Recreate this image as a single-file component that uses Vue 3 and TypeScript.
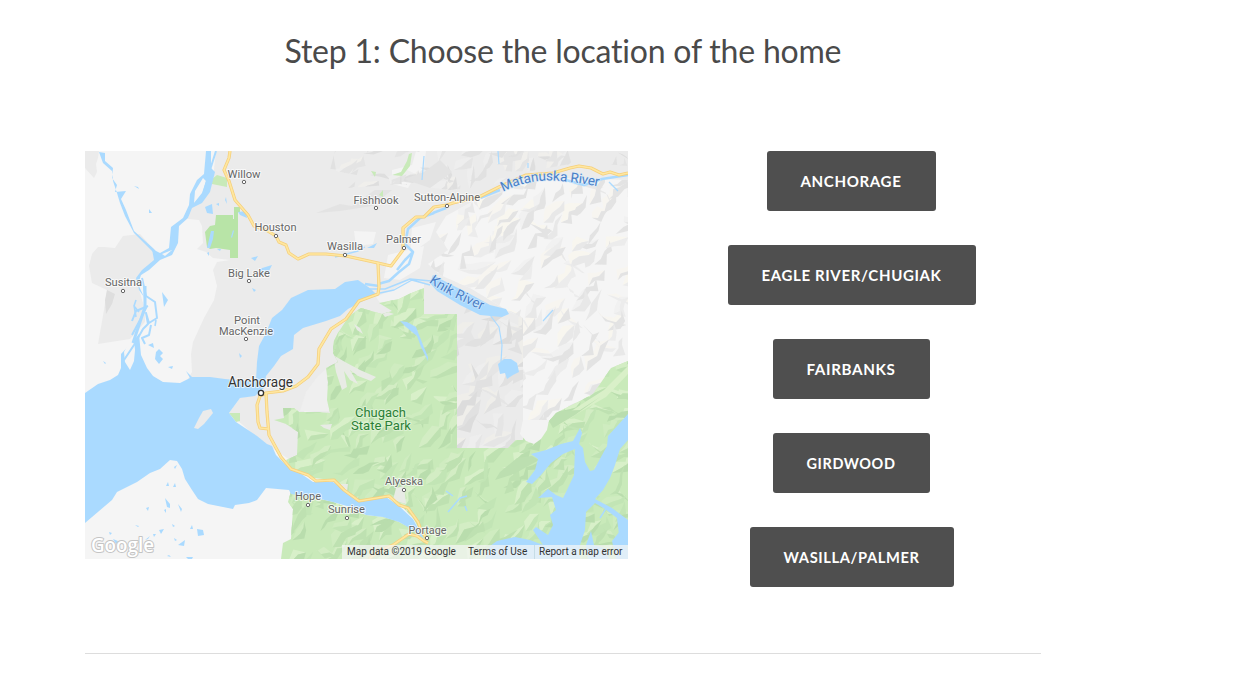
<script setup lang="ts">
interface Place {
  name: string;
  x: number;
  y: number;
  w: number;
  dot?: [number, number];
}

interface Facet {
  d: string;
  fill: string;
}

const locations = [
  { name: "Anchorage", width: 169, text: 101 },
  { name: "Eagle River/Chugiak", width: 248, text: 180 },
  { name: "Fairbanks", width: 157, text: 89 },
  { name: "Girdwood", width: 157, text: 89 },
  { name: "Wasilla/Palmer", width: 204, text: 136 },
];

const places: Place[] = [
  { name: "Willow", x: 244, y: 178, w: 33, dot: [244, 182] },
  { name: "Houston", x: 275.5, y: 231, w: 42, dot: [276, 236] },
  { name: "Fishhook", x: 376, y: 204, w: 45, dot: [376, 208] },
  { name: "Sutton-Alpine", x: 447, y: 201, w: 66, dot: [447, 206] },
  { name: "Wasilla", x: 345, y: 250, w: 36, dot: [345, 255] },
  { name: "Palmer", x: 403.5, y: 243, w: 35, dot: [404, 248] },
  { name: "Big Lake", x: 249, y: 277, w: 42, dot: [249, 281] },
  { name: "Susitna", x: 123.5, y: 286, w: 37, dot: [123, 291] },
  { name: "Point", x: 247, y: 324, w: 26 },
  { name: "MacKenzie", x: 246, y: 335, w: 54, dot: [246, 339] },
  { name: "Alyeska", x: 404, y: 485, w: 38, dot: [404, 490] },
  { name: "Hope", x: 308, y: 500, w: 26, dot: [308, 505] },
  { name: "Sunrise", x: 346.5, y: 513, w: 37, dot: [347, 518] },
  { name: "Portage", x: 427.5, y: 534, w: 38, dot: [427, 538] },
];

const park =
  "M361 308L349 316L338 333L334 341L333 353L338 362L326 368L328 382L327 400L330 413L318 412L299 412L294 408L283 408L284 418L274 420L286 424L298 432L297 455L286 460L291 468L313 478L333 480L346 490L359 501L386 496L399 503L413 518L421 532L413 529L399 522L383 517L366 515L333 502L310 497L291 491L288 502L293 509L291 539L283 543L281 559H628V361L611 368L593 394L576 403L556 413L549 421L541 434L523 434V440L516 440L508 448H457V314H424V288L409 294L399 299L379 303L392 311L382 314Z";
const eastMountains =
  "M628 180L600 179L560 178L524 183L500 193L470 203L446 216L436 232L448 250L428 264L440 275L470 288L508 311L523 318V434H549V421L576 403L593 394L611 368L628 361Z";
const northMountains = "M335 151H628V166L582 162L524 172L490 186L450 190L400 184L348 188L362 176L330 170Z";
const graySlope = "M457 300L478 306L508 315L523 318V448H457Z";

// Small seeded generator, so the relief is the same on every render
function random(seed: number) {
  let s = seed;
  return () => {
    s = (s * 16807) % 2147483647;
    return s / 2147483647;
  };
}

// Each ridge is a bent spine, lit on the upper left and shaded on the lower right
function relief(
  seed: number,
  box: [number, number, number, number],
  step: number,
  shades: string[],
  lights: string[],
): Facet[] {
  const rnd = random(seed);
  const [x0, y0, x1, y1] = box;
  const lit: Facet[] = [];
  const shaded: Facet[] = [];
  for (let y = y0; y < y1; y += step) {
    for (let x = x0; x < x1; x += step) {
      let px = x + (rnd() - 0.6) * step;
      let py = y + (rnd() + 0.3) * step;
      const base = rnd() < 0.85 ? -0.5 - rnd() * 0.6 : 0.2 + rnd() * 0.6;
      const spine: [number, number][] = [[px, py]];
      const count = 3 + Math.floor(rnd() * 2);
      for (let i = 0; i < count; i++) {
        const a = base + (rnd() - 0.5) * 1.3;
        const l = step * (0.3 + rnd() * 0.32);
        px += Math.cos(a) * l;
        py += Math.sin(a) * l;
        spine.push([px, py]);
      }
      const side = (sign: number) => {
        const back = spine
          .slice(1, -1)
          .reverse()
          .map(([sx, sy]) => {
            const w = step * (0.12 + rnd() * 0.26) * sign;
            return `${(sx + w * 0.9 + (rnd() - 0.5) * 2).toFixed(1)} ${(sy + w).toFixed(1)}`;
          });
        return "M" + [...spine.map(([a, b]) => `${a.toFixed(1)} ${b.toFixed(1)}`), ...back].join("L") + "Z";
      };
      shaded.push({ d: side(1), fill: shades[Math.floor(rnd() * shades.length)] });
      if (rnd() < 0.7) lit.push({ d: side(-1), fill: lights[Math.floor(rnd() * lights.length)] });
    }
  }
  return [...lit, ...shaded];
}

const parkRelief = relief(41, [265, 280, 645, 575], 17, ["#b9ddad", "#bee1b1", "#c2e5b5"], ["#d3edc4", "#d8f0c9", "#cfecc0"]);
const eastRelief = relief(77, [415, 170, 645, 440], 18, ["#e3e3e3", "#e8e8e8", "#ececec"], ["#f8f6ef", "#f7f5f0", "#f1f1f1"]);
const northRelief = relief(19, [325, 145, 645, 200], 16, ["#dedede", "#e1e1e1", "#e4e4e4"], ["#f0efec", "#eeeeee"]);
const slopeRelief = relief(23, [445, 300, 535, 460], 20, ["#dcdcdc", "#e1e1e1", "#e5e5e5"], ["#efeeea", "#eeeeee"]);

const ponds =
  "M134 186L138 187L139 189ZM149 209L152 213L149 213ZM205 207L212 204L213 214L207 213ZM216 204L219 203L219 206ZM225 200L226 197L227 204ZM162 292L168 300L164 307ZM148 345L153 343L154 348ZM156 352L159 349L163 353L160 356L163 359L159 364L155 359ZM168 367L173 366L172 369ZM103 361L106 363L105 364ZM252 288L256 290L254 292ZM239 353L242 356L240 358ZM174 467L177 465L175 469ZM166 486L168 482L169 486ZM173 487L175 483L176 487ZM165 498L170 504L170 508L167 507ZM178 504L182 509L181 512ZM146 508L149 507L148 511ZM164 510L166 509L166 513ZM135 525L139 526L138 527ZM159 530L164 529L161 534ZM190 529L192 525L193 529ZM197 529L203 530L204 535L198 536ZM172 524L175 526L173 527ZM178 545L185 540L184 546ZM109 532L112 533L110 535ZM145 540L150 536L148 539ZM113 539L118 541L116 544ZM153 534L156 534L154 537ZM169 555L171 557L167 556ZM186 557L193 557L192 559H188ZM174 538L177 540L175 541ZM251 258L258 256L255 261ZM259 269L272 265L269 271L265 275ZM367 248L377 243L374 248ZM207 253L209 252L209 256ZM217 249L221 249L220 251Z";

const roads = [
  "M230 151L229 158L224 170L229 181L235 200L248 215L254 226L266 230L276 236L279 242L286 245L289 253L298 259L309 254L326 254L346 256L378 263L391 266L403 250L403 228L416 217L424 217L434 207L447 205L453 203L479 197L499 187L526 175L553 173L570 168L579 166L591 168L603 174L610 172L619 175L628 173",
  "M378 263L379 287L378 294L359 301L346 319L331 329L319 349L318 364L308 377L296 386L283 391L266 393L260 396L257 405L258 422L260 428L268 429",
  "M266 393L267 412L269 435L281 457L291 469L308 475L316 481L334 480L344 490L359 501L389 496L399 505L408 508L418 522L421 530L427 539",
  "M428 543L424 541L417 536L409 534L393 545L379 551L369 559",
];
</script>

<template>
  <main class="page">
    <h1 class="title">
      <svg class="title-text" viewBox="0 0 557 44">
        <text x="-0.5" y="32" textLength="557">Step 1: Choose the location of the home</text>
      </svg>
    </h1>
    <section class="step">
      <div class="map">
        <svg class="map-canvas" viewBox="85 151 543 408">
          <defs>
            <clipPath id="park"><path :d="park" /></clipPath>
            <clipPath id="east"><path :d="eastMountains" /></clipPath>
            <clipPath id="north"><path :d="northMountains" /></clipPath>
            <clipPath id="slope"><path :d="graySlope" /></clipPath>
            <path id="matanuska" d="M503 192C520 183 540 179 560 181S586 184 601 187" />
            <path id="knik" d="M429 282C443 293 464 302 486 312" />
          </defs>

          <!-- land -->
          <path fill="#f5f5f5" d="M85 151H628V559H85Z" />
          <path
            fill="#ebebeb"
            d="M85 151H99L98 158L96 164L97 172L94 178L85 168ZM123 236L140 234L155 251L156 262L140 276L138 286L145 310L145 322L130 339L98 344L104 310L107 290L92 283L89 266L92 254L98 247L104 247L115 248Z"
          />
          <path
            fill="#ebebeb"
            d="M216 151H628V180L600 179L560 178L524 183L500 193L470 203L446 216L436 232L448 250L428 264L440 275L470 288L508 311L523 318V448H457L400 460H290L260 440L229 413L240 398L258 394L256 380L188 379L192 372L191 354L193 342L204 318L214 300L217 286L213 270L217 262L230 260L213 258L206 252L197 249L203 243L202 226L199 220L188 219L190 206L206 192L213 178Z"
          />
          <path fill="#dedede" d="M107 290L115 294L112 304L106 314L105 300Z" />
          <path fill="#f4f4f4" d="M392 170L412 165L416 151H426L424 168L414 178L408 188L392 184ZM354 231L376 232L373 244L356 246ZM412 228L436 222L430 240L410 254ZM388 255L424 246L420 268L400 280L384 278ZM308 404L322 394L326 410L304 412Z" />
          <path fill="#efefef" d="M306 392L318 376L326 369L328 388L329 411L300 411Z" />
          <path fill="#f2f2f2" d="M392 290L408 280L424 284L424 288L399 299L380 303L376 297ZM354 288L372 292L362 286Z" />
          <g clip-path="url(#north)">
            <path v-for="(f, i) in northRelief" :key="i" :d="f.d" :fill="f.fill" />
          </g>
          <path fill="#e3e3e3" d="M316 213L340 204L352 206L375 190L392 190L372 206L340 211ZM404 179L424 172L440 160L452 172L430 188Z" />
          <g clip-path="url(#east)">
            <path v-for="(f, i) in eastRelief" :key="i" :d="f.d" :fill="f.fill" />
          </g>
          <g clip-path="url(#slope)">
            <path v-for="(f, i) in slopeRelief" :key="i" :d="f.d" :fill="f.fill" />
          </g>
          <path fill="#c8eab9" d="M371 171L376 172L375 177ZM379 195L383 190L383 197ZM392 175L401 172L407 161L409 154L412 153L410 166L402 176ZM229 413L240 413V421L236 422Z" />
          <path fill="#c8eab9" d="M212 179L217 175L227 178V187L212 184Z" />
          <path fill="#b8e4a7" d="M216 215H233V219H234V207H240V212H238V240L238 258H230V250L216 248L210 249L207 247L205 232L210 226L215 225Z" />

          <!-- state park and the forest round it -->
          <path :d="park" fill="#c9eaba" />
          <g clip-path="url(#park)">
            <path v-for="(f, i) in parkRelief" :key="i" :d="f.d" :fill="f.fill" />
            <path fill="#e8ebe5" d="M333 355L345 362L360 370L376 377L371 381L358 376L350 370L358 384L350 380L344 371L347 387L342 390L336 372ZM354 324L360 328L363 334L357 330ZM379 309L394 314L385 317ZM320 425L332 424L330 430L324 428ZM396 488L404 486L406 504L393 500ZM341 484L348 484L347 492L340 487Z" />
            <path fill="#d9f0c8" d="M556 421L582 404L604 390L628 366V374L606 397L580 412L560 425Z" />
            <path fill="#bcdfb0" d="M549 421L557 411L580 410L600 397L575 415L553 428ZM500 472L517 458L532 456L539 460L514 474L495 480Z" />
          </g>
          <path fill="#f3f3f3" d="M520 434L523 420H549L547 430L541 439L534 444L526 441Z" />

          <!-- sea and inlets -->
          <path
            class="water"
            d="M85 393L98 384L110 380L118 375L121 368L121 354L134 340L139 334L141 355L147 368L153 376L163 382L180 383L190 378L186 371L192 377L210 377L225 379L248 381L256 380L257 362L259 346L266 333L272 318L282 310L291 298L308 290L335 289L345 282L358 280L364 284L371 289L376 294L363 301L348 309L340 316L326 321L303 328L294 335L293 349L281 356L274 366L266 376L264 388L255 396L240 398L229 413L236 422L245 428L257 436L267 444L272 446L276 455L286 465L297 471L313 482L333 482L346 491L359 502L386 497L399 506L413 519L424 539L413 530L399 522L383 517L366 515L350 507L333 502L312 497L291 494L289 490L266 488L257 500L249 503L235 505L233 509L208 504L198 499L192 490L185 479L182 469L177 461L170 460L160 469L150 473L137 482L117 492L112 500L85 523Z"
          />
          <path
            class="water"
            d="M628 414L608 436L607 446L601 457L594 470L590 471L585 462L583 448L579 444L582 433L580 428L573 441L561 444L546 450L531 454L538 459L535 470L526 482L532 484L541 475L551 463L563 454L575 449L574 475L567 490L563 498L556 495L548 489L538 498L552 497L556 510L550 515L553 525L548 535L536 527L533 530L543 545L530 540L515 537L497 541L490 546L485 559H580L580 545L585 530L586 512L595 503L605 509L617 518L619 535L628 548V520L612 508L595 499L603 490L610 478L615 465L620 449L628 440Z"
          />
          <path class="water" d="M591 531L594 545L604 548L609 559H588L586 545ZM612 541L620 531L628 550V559H616Z" />
          <path fill="#f5f5f5" d="M127 346L134 339L135 350L134 361L130 370L125 362L124 352Z" />
          <path fill="#ebebeb" d="M199 418L203 411L211 409L213 413L204 424L198 429L194 428Z" />

          <!-- rivers and lakes -->
          <path class="water" d="M99 152L105 153L105 161L113 168L112 178L117 185L115 192L126 191L121 199L126 210L134 231L154 249L158 254L153 252L134 233L125 216L120 203L117 193L113 181L112 171L103 163Z" />
          <path class="water" fill-rule="evenodd" d="M206 151H211V168L215 172L210 192L202 203L192 208L188 218L179 226L178 243L172 255L160 260L149 270L141 275L138 284L144 297L139 290L136 278L142 270L154 260L152 249L160 253L169 248L171 227L183 218L189 205L190 194L197 180L204 174ZM203 178L195 191L194 203L202 193L206 181ZM172 250L162 254L165 256Z" />
          <path class="river" stroke-width="2" d="M216 151L210 170L203 195L196 204M142 278L146 296L155 302L157 318L149 323L146 313L148 324L143 329L134 345L124 360M147 306L140 320L132 335M148 306L136 311L132 321M151 325L149 335L142 338L145 344" />
          <path class="river" stroke-width="1.6" d="M134 305L136 317M136 300L134 306L139 312M156 320L155 326M144 286L145 304" />
          <path class="river" stroke-width="3" d="M145 286L145 307L133 343" />
          <path class="water" :d="ponds" />
          <path class="water" d="M207 248L211 231L214 231L213 239L210 248ZM231 237L233 230L234 231L232 238ZM238 212L246 211L247 218L240 215ZM498 364L504 359L511 359L517 363L519 372L513 375L507 379L505 373L500 374Z" />
          <path class="water" d="M433 275L450 284L470 294L490 305L506 309L509 314L502 317L480 315L460 305L437 291L430 283Z" />
          <path class="river" stroke-width="1.2" d="M490 315L499 327L502 345L501 362M543 321L553 310M498 151L499 164M528 163L528 168M424 156L422 180" />
          <path class="river" stroke-width="2.5" d="M434 213L420 218L408 229L405 244L413 252L409 264L399 272L389 281L378 284M446 208L433 213M413 252L405 260L397 270M379 286L365 284M628 175L602 179L584 185L566 180M480 198L500 190" />
          <path class="river" stroke-width="1.4" d="M431 281L410 279L385 289L370 289M430 285L412 280L394 290L380 293M335 257L358 251L365 247M609 182L618 191M446 491L453 496M448 512L460 498L467 496M465 506L467 511M600 518L607 507" />
          <path class="water" d="M400 321L407 322L416 327L423 345L428 357L428 361L421 347L417 336L406 327Z" />

          <!-- highways -->
          <g class="road-case"><path v-for="d in roads" :key="d" :d="d" /></g>
          <g class="road"><path v-for="d in roads" :key="d" :d="d" /></g>

          <!-- labels -->
          <g class="labels">
            <template v-for="p in places" :key="p.name">
              <text :x="p.x" :y="p.y" :textLength="p.w" lengthAdjust="spacingAndGlyphs">{{ p.name }}</text>
              <circle v-if="p.dot" :cx="p.dot[0]" :cy="p.dot[1]" r="1.7" />
            </template>
            <text class="city" x="260.5" y="387" textLength="65" lengthAdjust="spacingAndGlyphs">Anchorage</text>
            <circle cx="261" cy="393" r="2.6" class="city-dot" />
            <text class="park-name" x="380.5" y="417" textLength="51" lengthAdjust="spacingAndGlyphs">Chugach</text>
            <text class="park-name" x="381" y="430" textLength="60" lengthAdjust="spacingAndGlyphs">State Park</text>
          </g>
          <text class="river-name"><textPath href="#matanuska" textLength="98">Matanuska River</textPath></text>
          <text class="river-name"><textPath href="#knik" textLength="60">Knik River</textPath></text>
          <text class="logo" x="91" y="552" textLength="63" lengthAdjust="spacingAndGlyphs">Google</text>
        </svg>
        <div class="credits">
          <span class="credit data">Map data ©2019 Google</span>
          <span class="credit terms">Terms of Use</span>
          <span class="credit report">Report a map error</span>
        </div>
      </div>
      <nav class="choices">
        <button v-for="l in locations" :key="l.name" class="choice" :style="{ width: l.width + 'px' }">
          <svg class="choice-text" height="20" :width="l.text">
            <text x="-0.5" y="15.5" :textLength="l.text" lengthAdjust="spacingAndGlyphs">{{ l.name.toUpperCase() }}</text>
          </svg>
        </button>
      </nav>
    </section>
    <hr class="rule" />
  </main>
</template>

<style>
body {
  background: #fff;
}
</style>

<style scoped>
.page {
  width: 956px;
  margin-left: 85px;
  padding-top: 31px;
}
.title {
  display: flex;
  justify-content: center;
  height: 44px;
  margin: 0 0 76px;
}
.title-text {
  width: 557px;
  height: 44px;
  overflow: visible;
  font: 400 32px Lato, sans-serif;
  font-variant-ligatures: none;
  fill: #4a4a4a;
}
.step {
  display: flex;
  gap: 34px;
}
.map {
  position: relative;
  width: 543px;
  height: 408px;
  overflow: hidden;
}
.map-canvas {
  display: block;
  width: 543px;
  height: 408px;
}
.water {
  fill: #aadaff;
}
.river {
  fill: none;
  stroke: #aadaff;
  stroke-linejoin: round;
}
.road-case {
  fill: none;
  stroke: #f5cf7c;
  stroke-width: 3.2;
  stroke-linejoin: round;
}
.road {
  fill: none;
  stroke: #ffe79f;
  stroke-width: 1.7;
  stroke-linejoin: round;
}
.labels text {
  font: 400 11px Roboto, sans-serif;
  text-anchor: middle;
  fill: #666;
  stroke: rgba(255, 255, 255, 0.7);
  stroke-width: 2px;
  stroke-linejoin: round;
  paint-order: stroke;
}
.labels circle {
  fill: #fff;
  stroke: #666;
  stroke-width: 1;
}
.labels .city {
  font-size: 14px;
  fill: #333;
}
.labels .city-dot {
  stroke: #333;
  stroke-width: 1.3;
}
.labels .park-name {
  font-size: 13px;
  fill: #2b8037;
  stroke: rgba(226, 244, 217, 0.8);
}
.river-name {
  font: 400 13.5px Roboto, sans-serif;
  fill: #4a7fc6;
  stroke: rgba(214, 234, 252, 0.8);
  stroke-width: 1.4px;
  paint-order: stroke;
}
.logo {
  font: 600 19.5px "Open Sans", sans-serif;
  fill: #fff;
  stroke: #c4c4c4;
  stroke-width: 2px;
  stroke-linejoin: round;
  paint-order: stroke;
}
.credits {
  position: absolute;
  right: 0;
  bottom: 0;
  display: flex;
  height: 14px;
  font: 400 10px/14px Roboto, sans-serif;
  color: #333;
  background: rgba(245, 245, 245, 0.72);
  white-space: nowrap;
}
.credit {
  box-sizing: border-box;
}
.data {
  width: 126px;
  padding-left: 5px;
}
.terms {
  width: 66px;
}
.report {
  width: 94px;
  padding-left: 4px;
  border-left: 1px solid rgba(190, 215, 225, 0.8);
}
.choices {
  display: flex;
  flex-direction: column;
  align-items: center;
  gap: 34px;
  width: 379px;
  margin-left: auto;
}
.choice {
  display: flex;
  align-items: center;
  justify-content: center;
  height: 60px;
  padding: 0;
  border: 0;
  border-radius: 3px;
  background: #4f4f4f;
}
.choice-text {
  overflow: visible;
  font: 700 14.5px Lato, sans-serif;
  letter-spacing: 0.6px;
  fill: #fff;
}
.rule {
  height: 1px;
  margin: 66px 0 0;
  border: 0;
  background: #ddd;
}
</style>
